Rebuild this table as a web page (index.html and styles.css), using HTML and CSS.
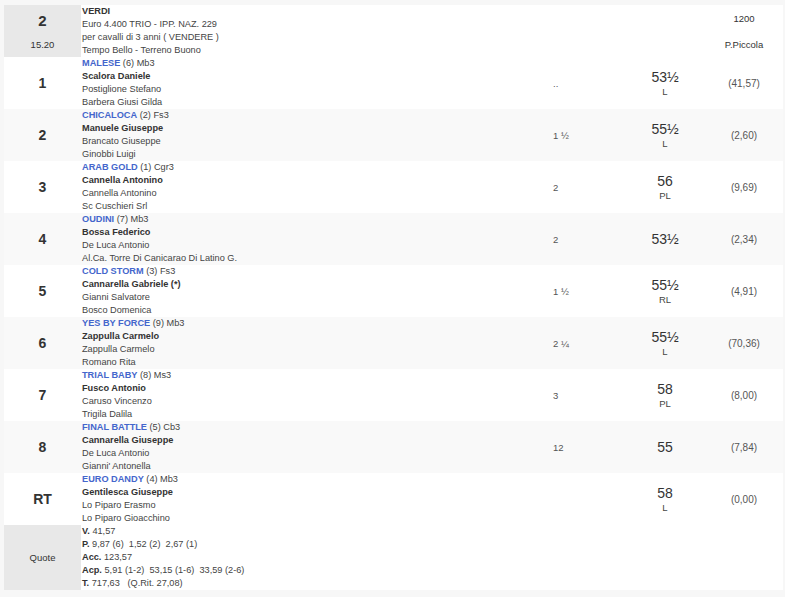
FILE: index.html
```html
<!DOCTYPE html>
<html>
<head>
<meta charset="utf-8">
<link rel="stylesheet" href="styles.css">
</head>
<body>
<table class="race">
  <colgroup>
    <col class="c-pos"><col class="c-info"><col class="c-dist"><col class="c-wt"><col class="c-odds">
  </colgroup>
  <tr class="head">
    <td class="pos gray"><div class="big">2</div><div class="time">15.20</div></td>
    <td class="info"><b class="title">VERDI</b><br>Euro 4.400 TRIO - IPP. NAZ. 229<br>per cavalli di 3 anni ( VENDERE )<br>Tempo Bello - Terreno Buono</td>
    <td></td>
    <td></td>
    <td class="odds hdr"><div class="dist">1200</div><div class="track">P.Piccola</div></td>
  </tr>
  <tr class="w">
    <td class="pos"><span class="big">1</span></td>
    <td class="info"><span class="horse">MALESE</span> (6) Mb3<br><b class="jk">Scalora Daniele</b><br>Postiglione Stefano<br>Barbera Giusi Gilda</td>
    <td class="dst">..</td>
    <td class="wt"><span class="kg">53½</span><br>L</td>
    <td class="odds">(41,57)</td>
  </tr>
  <tr class="g">
    <td class="pos"><span class="big">2</span></td>
    <td class="info"><span class="horse">CHICALOCA</span> (2) Fs3<br><b class="jk">Manuele Giuseppe</b><br>Brancato Giuseppe<br>Ginobbi Luigi</td>
    <td class="dst">1 ½</td>
    <td class="wt"><span class="kg">55½</span><br>L</td>
    <td class="odds">(2,60)</td>
  </tr>
  <tr class="w">
    <td class="pos"><span class="big">3</span></td>
    <td class="info"><span class="horse">ARAB GOLD</span> (1) Cgr3<br><b class="jk">Cannella Antonino</b><br>Cannella Antonino<br>Sc Cuschieri Srl</td>
    <td class="dst">2</td>
    <td class="wt"><span class="kg">56</span><br>PL</td>
    <td class="odds">(9,69)</td>
  </tr>
  <tr class="g">
    <td class="pos"><span class="big">4</span></td>
    <td class="info"><span class="horse">OUDINI</span> (7) Mb3<br><b class="jk">Bossa Federico</b><br>De Luca Antonio<br>Al.Ca. Torre Di Canicarao Di Latino G.</td>
    <td class="dst">2</td>
    <td class="wt"><span class="kg">53½</span></td>
    <td class="odds">(2,34)</td>
  </tr>
  <tr class="w">
    <td class="pos"><span class="big">5</span></td>
    <td class="info"><span class="horse">COLD STORM</span> (3) Fs3<br><b class="jk">Cannarella Gabriele (*)</b><br>Gianni Salvatore<br>Bosco Domenica</td>
    <td class="dst">1 ½</td>
    <td class="wt"><span class="kg">55½</span><br>RL</td>
    <td class="odds">(4,91)</td>
  </tr>
  <tr class="g">
    <td class="pos"><span class="big">6</span></td>
    <td class="info"><span class="horse">YES BY FORCE</span> (9) Mb3<br><b class="jk">Zappulla Carmelo</b><br>Zappulla Carmelo<br>Romano Rita</td>
    <td class="dst">2 ¼</td>
    <td class="wt"><span class="kg">55½</span><br>L</td>
    <td class="odds">(70,36)</td>
  </tr>
  <tr class="w">
    <td class="pos"><span class="big">7</span></td>
    <td class="info"><span class="horse">TRIAL BABY</span> (8) Ms3<br><b class="jk">Fusco Antonio</b><br>Caruso Vincenzo<br>Trigila Dalila</td>
    <td class="dst">3</td>
    <td class="wt"><span class="kg">58</span><br>PL</td>
    <td class="odds">(8,00)</td>
  </tr>
  <tr class="g">
    <td class="pos"><span class="big">8</span></td>
    <td class="info"><span class="horse">FINAL BATTLE</span> (5) Cb3<br><b class="jk">Cannarella Giuseppe</b><br>De Luca Antonio<br>Gianni' Antonella</td>
    <td class="dst">12</td>
    <td class="wt"><span class="kg">55</span></td>
    <td class="odds">(7,84)</td>
  </tr>
  <tr class="w">
    <td class="pos"><span class="big">RT</span></td>
    <td class="info"><span class="horse">EURO DANDY</span> (4) Mb3<br><b class="jk">Gentilesca Giuseppe</b><br>Lo Piparo Erasmo<br>Lo Piparo Gioacchino</td>
    <td class="dst"></td>
    <td class="wt"><span class="kg">58</span><br>L</td>
    <td class="odds">(0,00)</td>
  </tr>
  <tr class="w">
    <td class="pos gray quote">Quote</td>
    <td class="info"><b>V.</b> 41,57<br><b>P.</b> 9,87 (6)&nbsp; 1,52 (2)&nbsp; 2,67 (1)<br><b>Acc.</b> 123,57<br><b>Acp.</b> 5,91 (1-2)&nbsp; 53,15 (1-6)&nbsp; 33,59 (2-6)<br><b>T.</b> 717,63 &nbsp; (Q.Rit. 27,08)</td>
    <td></td>
    <td></td>
    <td></td>
  </tr>
</table>
</body>
</html>
```
FILE: styles.css
```css
html, body {
  margin: 0;
  padding: 0;
  background: #f7f7f7;
}
body {
  padding: 5px 2px 0 4px;
  font-family: "Liberation Sans", Arial, sans-serif;
  font-size: 10px;
  color: #444;
}
.race {
  border-collapse: collapse;
  width: 779px;
  table-layout: fixed;
  line-height: 13px;
}
.c-pos { width: 77px; }
.c-info { width: 464px; }
.c-dist { width: 80px; }
.c-wt { width: 80px; }
.c-odds { width: 78px; }
.race td {
  padding: 0;
  vertical-align: middle;
}
.head td, tr.w td { background: #fff; }
tr.g td { background: #f9f9f9; }
.race td.gray { background: #e8e8e8; }
td.info {
  padding-left: 1px;
  font-size: 9.2px;
}
.pos {
  text-align: center;
  color: #333;
}
.big {
  font-size: 14px;
  font-weight: bold;
  line-height: 18px;
  color: #333;
}
.head .pos .big { font-size: 15px; line-height: 18px; }
.time { margin-top: 8px; color: #333; font-size: 9.5px; }
.title { color: #333; }
.horse {
  color: #4466cc;
  font-weight: bold;
}
.jk { color: #333; }
.dst {
  padding-left: 8px !important;
  color: #555;
  font-size: 9.5px;
}
.wt {
  text-align: center;
  color: #444;
  font-size: 9.5px;
}
.kg {
  font-size: 14px;
  line-height: 16px;
  color: #333;
}
.odds {
  text-align: center;
  color: #555;
}
.hdr { color: #333; font-size: 9.5px; }
.hdr .dist { margin-bottom: 13px; }
.quote { font-size: 9.5px; color: #333; }
.info b { color: #333; }
```
